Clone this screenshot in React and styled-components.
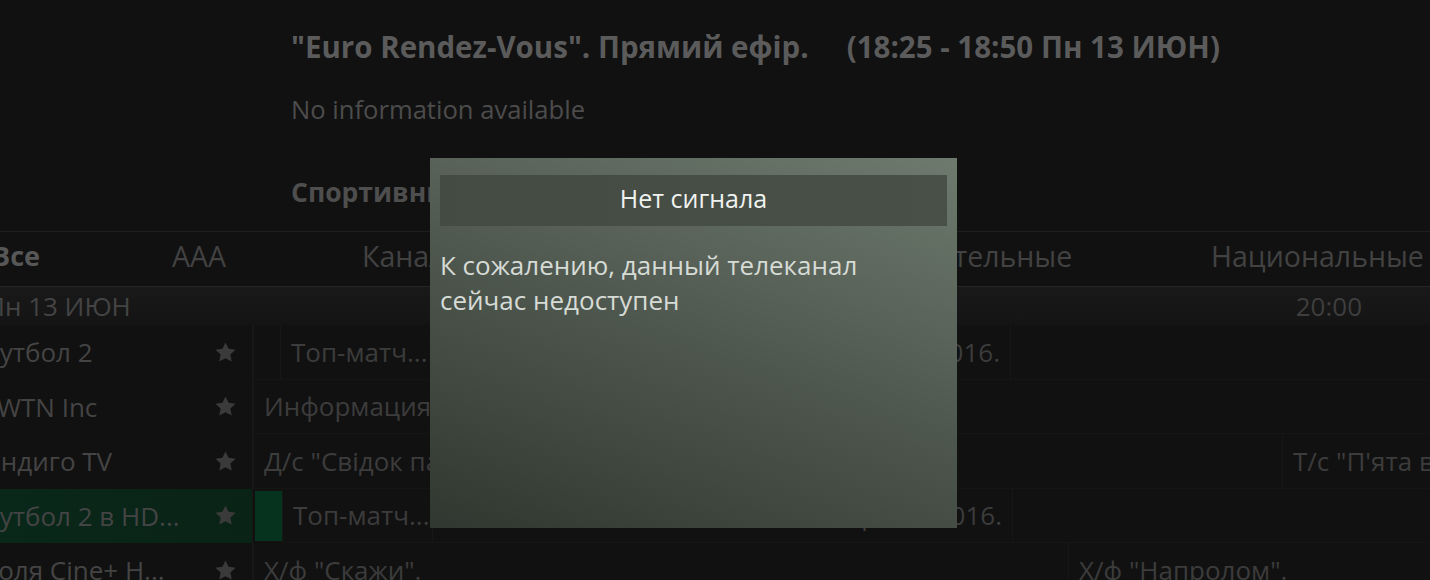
import React from "react";
import styled, { createGlobalStyle } from "styled-components";

const GlobalStyle = createGlobalStyle`
  html, body {
    margin: 0;
    padding: 0;
    background: #111111;
  }
  body {
    font-family: "Open Sans", "Noto Sans", sans-serif;
  }
`;

const tabs = [
  { label: "Все", width: 180, bold: true, shift: -8 },
  { label: "ААА", width: 190 },
  { label: "Каналы", width: 250 },
  { label: "Спорт", width: 224 },
  { label: "Познавательные", width: 375 },
  { label: "Национальные", width: 240 },
];

const channels = [
  {
    name: "Футбол 2",
    shift: -21,
    cells: [
      { width: 27 },
      { width: 150, text: "Топ-матч..." },
      { width: 580, text: "Чемпионат Европы 2016.", right: true },
      { text: "" },
    ],
  },
  {
    name: "WTN Inc",
    shift: -3,
    cells: [{ text: "Информация" }],
  },
  {
    name: "Индиго TV",
    shift: -19,
    cells: [
      { width: 1029, text: "Д/с \"Свідок пам'яті\"" },
      { text: "Т/с \"П'ята варта\"" },
    ],
  },
  {
    name: "Футбол 2 в HD...",
    shift: -21,
    active: true,
    cells: [
      { width: 27, green: true },
      { width: 150, text: "Топ-матч..." },
      { width: 580, text: "Чемпионат Европы 2016.", right: true },
      { text: "" },
    ],
  },
  {
    name: "Ноля Cine+ H...",
    shift: -21,
    cells: [
      { width: 815, text: "Х/ф \"Скажи\"." },
      { text: "Х/ф \"Напролом\"." },
    ],
  },
];

const Star = () => (
  <StarIcon viewBox="0 0 24 24">
    <path d="M12 1.5l3.2 6.7 7.3.9-5.4 5.1 1.4 7.3L12 17.9l-6.5 3.6 1.4-7.3-5.4-5.1 7.3-.9z" />
  </StarIcon>
);

export default function App() {
  return (
    <Screen>
      <GlobalStyle />
      <Info>
        <Title>
          "Euro Rendez-Vous". Прямий ефір.
          <TimeSpan>(18:25 - 18:50 Пн 13 ИЮН)</TimeSpan>
        </Title>
        <Desc>No information available</Desc>
        <Genre>Спортивные</Genre>
      </Info>

      <TabBar>
        {tabs.map((t) => (
          <Tab key={t.label} width={t.width} bold={t.bold} shift={t.shift}>
            {t.label}
          </Tab>
        ))}
      </TabBar>

      <DateRow>
        <DateLabel>Пн 13 ИЮН</DateLabel>
        <TimeLabel>20:00</TimeLabel>
      </DateRow>

      <Guide>
        {channels.map((ch) => (
          <Row key={ch.name}>
            <NameCell active={ch.active}>
              <ChannelName shift={ch.shift}>{ch.name}</ChannelName>
              <Star />
            </NameCell>
            <Programs>
              {ch.cells.map((c, i) => (
                <ProgCell key={i} width={c.width} green={c.green} right={c.right}>
                  {c.text}
                </ProgCell>
              ))}
            </Programs>
          </Row>
        ))}
      </Guide>

      <Modal>
        <ModalHeader>Нет сигнала</ModalHeader>
        <ModalText>
          К сожалению, данный телеканал
          <br />
          сейчас недоступен
        </ModalText>
      </Modal>
    </Screen>
  );
}

const Screen = styled.div`
  position: relative;
  width: 1430px;
  height: 580px;
  overflow: hidden;
  background: #111111;
`;

const Info = styled.div`
  display: flex;
  flex-direction: column;
  padding: 29px 0 0 291px;
  height: 202px;
`;

const Title = styled.div`
  font-size: 29.5px;
  font-weight: 700;
  line-height: 36px;
  color: #5b5b5b;
  white-space: nowrap;
`;

const TimeSpan = styled.span`
  margin-left: 38px;
`;

const Desc = styled.div`
  margin-top: 27px;
  font-size: 25.6px;
  line-height: 36px;
  color: #4c4c4c;
`;

const Genre = styled.div`
  margin-top: 46px;
  font-size: 26.5px;
  font-weight: 700;
  line-height: 36px;
  color: #4e4e4e;
`;

const TabBar = styled.div`
  display: flex;
  align-items: center;
  padding-bottom: 7px;
  box-sizing: border-box;
  height: 56px;
  border-top: 1px solid #1e1e1e;
  border-bottom: 1px solid #262626;
  background: #111111;
`;

const Tab = styled.div`
  flex: 0 0 ${(p) => p.width}px;
  margin-left: ${(p) => p.shift || 0}px;
  font-size: ${(p) => (p.bold ? "27px" : "28.5px")};
  font-weight: ${(p) => (p.bold ? 700 : 400)};
  color: ${(p) => (p.bold ? "#575757" : "#424242")};
  white-space: nowrap;
`;

const DateRow = styled.div`
  display: flex;
  align-items: center;
  justify-content: space-between;
  height: 38px;
  padding-right: 68px;
  background: linear-gradient(180deg, #191919 0%, #141414 100%);
`;

const DateLabel = styled.div`
  margin-left: -14px;
  font-size: 26px;
  color: #444444;
`;

const TimeLabel = styled.div`
  font-size: 26px;
  color: #3e3e3e;
`;

const Guide = styled.div`
  display: flex;
  flex-direction: column;
`;

const Row = styled.div`
  display: flex;
  height: 54.5px;
`;

const NameCell = styled.div`
  flex: 0 0 253px;
  display: flex;
  align-items: center;
  justify-content: space-between;
  padding-right: 15px;
  box-sizing: border-box;
  overflow: hidden;
  border-right: 1px solid #171717;
  background: ${(p) =>
    p.active ? "linear-gradient(90deg, #09281a 0%, #0a2317 100%)" : "transparent"};
`;

const ChannelName = styled.div`
  margin-left: ${(p) => p.shift}px;
  font-size: 26px;
  color: #444444;
  white-space: nowrap;
`;

const StarIcon = styled.svg`
  width: 23px;
  height: 23px;
  flex: 0 0 23px;
  fill: #3a3a3a;
`;

const Programs = styled.div`
  flex: 1;
  display: flex;
  min-width: 0;
`;

const ProgCell = styled.div`
  flex: ${(p) => (p.width ? `0 0 ${p.width}px` : "1")};
  min-width: 0;
  display: flex;
  align-items: center;
  justify-content: ${(p) => (p.right ? "flex-end" : "flex-start")};
  padding: 0 10px;
  box-sizing: border-box;
  border-left: 1px solid #171717;
  border-bottom: 1px solid #151515;
  font-size: 26px;
  color: #3c3c3c;
  white-space: nowrap;
  overflow: hidden;
  background: ${(p) => (p.green ? "#05331e" : "transparent")};
  ${(p) => p.green && "margin: 2px 0 2px 2px; padding: 0; border: none;"}
`;

const Modal = styled.div`
  position: absolute;
  left: 430px;
  top: 158px;
  width: 527px;
  height: 370px;
  box-sizing: border-box;
  padding: 17px 10px;
  background: linear-gradient(20deg, #303730 0%, #4e574e 50%, #6e7a6e 100%);
  display: flex;
  flex-direction: column;
`;

const ModalHeader = styled.div`
  height: 51px;
  padding-bottom: 5px;
  box-sizing: border-box;
  display: flex;
  align-items: center;
  justify-content: center;
  background: linear-gradient(90deg, #434b43 0%, #485048 100%);
  font-size: 25px;
  color: #f0f2f0;
`;

const ModalText = styled.div`
  margin-top: 22px;
  font-size: 26px;
  line-height: 35px;
  color: #d6dbd6;
`;
